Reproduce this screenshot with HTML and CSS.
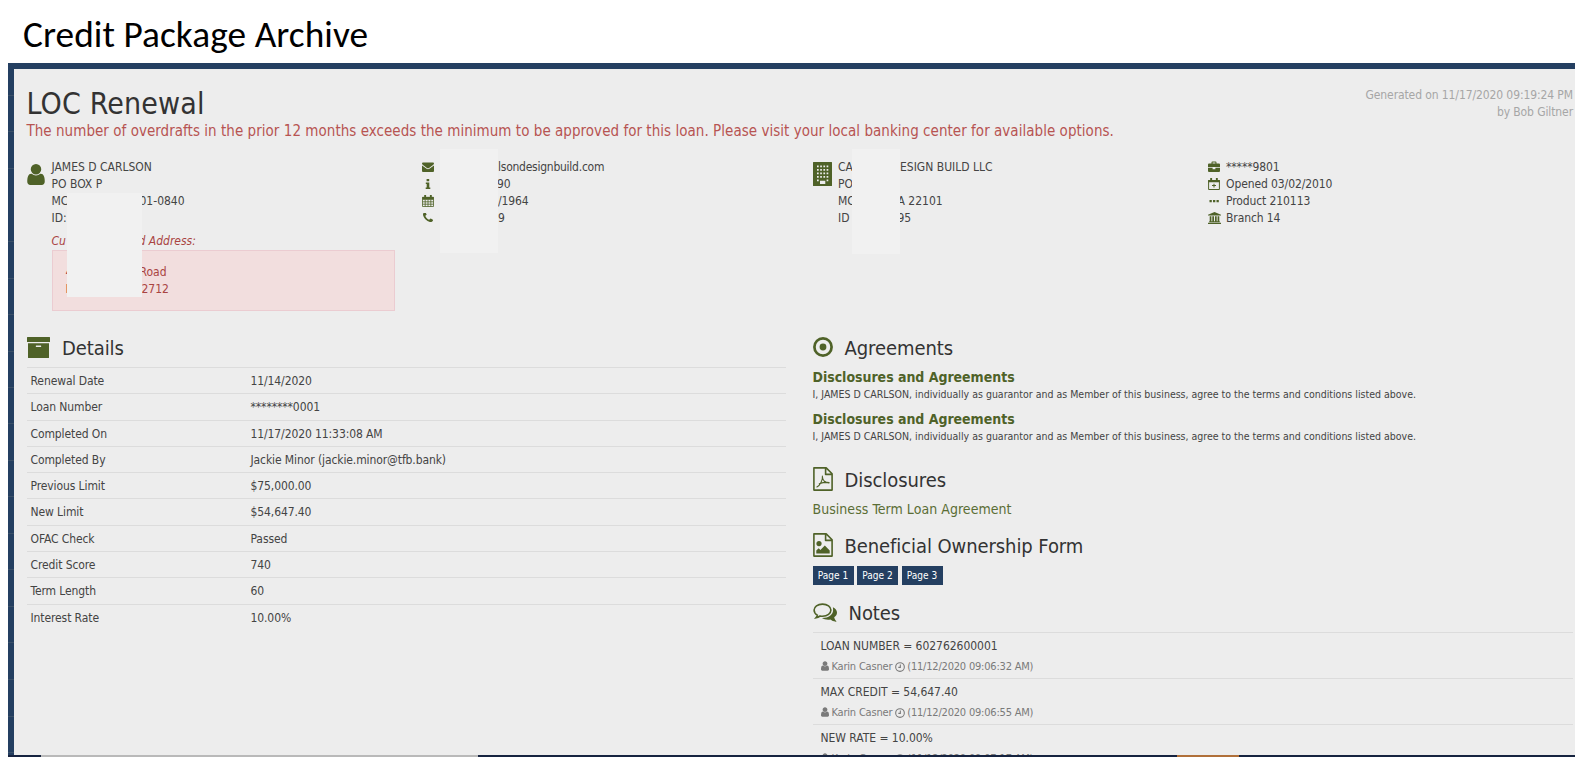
FILE: index.html
```html
<!DOCTYPE html>
<html lang="en">
<head>
<meta charset="utf-8">
<title>Credit Package Archive</title>
<link rel="stylesheet" href="styles.css">
</head>
<body>
<svg class="defs" aria-hidden="true">
  <symbol id="user" viewBox="256 128 1280 1536"><path d="M1536 1399q0 109-62.500 187t-150.500 78h-854q-88 0-150.500-78t-62.500-187q0-85 8.500-160.500t31.500-152 58.500-131 94-89 134.500-34.500q131 128 313 128t313-128q76 0 134.500 34.500t94 89 58.500 131 31.500 152 8.500 160.500zm-256-887q0 159-112.500 271.500t-271.500 112.500-271.500-112.500-112.500-271.500 112.500-271.500 271.500-112.500 271.500 112.500 112.500 271.500z"/></symbol>
  <symbol id="phone" viewBox="192 256 1408 1408"><path d="M1600 1240q0 27-10 70.500t-21 68.500q-21 50-122 106-94 51-186 51-27 0-53-3.500t-57.500-12.500-47-14.500-55.500-20.500-49-18q-98-35-175-83-127-79-264-216t-216-264q-48-77-83-175-3-9-18-49t-20.500-55.500-14.500-47-12.500-57.500-3.500-53q0-92 51-186 56-101 106-122 25-11 68.500-21t70.500-10q14 0 21 3 18 6 53 76 11 19 30 54t35 63.500 31 53.500q3 4 17.500 25t21.500 35.500 7 28.500q0 20-28.500 50t-62 55-62 53-28.500 46q0 9 5 22.500t8.500 20.500 14 24 11.500 19q76 137 174 235t235 174q2 1 19 11.500t24 14 20.500 8.500 22.500 5q18 0 46-28.500t53-62 55-62 50-28.500q14 0 28.500 7t35.500 21.500 25 17.500q25 15 53.500 31t63.500 35 54 30q70 35 76 53 3 7 3 21z"/></symbol>
  <symbol id="clock" viewBox="0 0 12 12"><path d="M6 .8a5.200 5.200 0 1 0 0 10.400A5.200 5.200 0 0 0 6 .8zM6.400 3v3.400H4" fill="none" stroke="currentColor" stroke-width="1.300"/></symbol>
</svg>

<h1 class="slide-title">Credit Package Archive</h1>

<main class="window">
  <div class="rail"></div>
  <div class="content">
    <header class="head">
      <div>
        <h2 class="loan-title">LOC Renewal</h2>
        <p class="warning">The number of overdrafts in the prior 12 months exceeds the minimum to be approved for this loan. Please visit your local banking center for available options.</p>
      </div>
      <p class="generated">Generated on 11/17/2020 09:19:24 PM<br>by Bob Giltner</p>
    </header>

    <section class="contacts">
      <div class="contact">
        <svg class="ico-user"><use href="#user"/></svg>
        <div class="lines">
          <div>JAMES D CARLSON</div>
          <div>PO BOX P</div>
          <div><span class="cut cut-a">MC</span>01-0840</div>
          <div><span class="cut cut-a">ID:</span></div>
          <div class="addr-label"><span class="cut cut-b">Cu</span>d Address:</div>
          <div class="addr">
            <div><span class="cut cut-c">4</span>Road</div>
            <div><span class="cut cut-d">L</span>2712</div>
          </div>
          <div class="mask mask-a"></div>
        </div>
      </div>

      <div class="contact">
        <ul class="facts facts-masked">
          <li><svg class="fi" viewBox="0 0 12 12"><path d="M0 2.600Q0 1.500 1 1.500H11Q12 1.500 12 2.600 12 3.200 11 4L7 6.900Q6 7.500 5 6.900L1 4Q0 3.200 0 2.600zM0 4.500 4.600 7.800Q6 8.700 7.400 7.800L12 4.500V10Q12 11 11 11H1Q0 11 0 10z"/></svg><span class="email">lsondesignbuild.com</span></li>
          <li><svg class="fi" viewBox="0 0 12 12"><path d="M4.600 1h2.600v2.200H4.600zM3.800 4.600h3.500v4.800h1V11H3.700V9.400h1V6.100h-.9z"/></svg><span class="tuck">90</span></li>
          <li><svg class="fi" viewBox="0 0 12 12"><path d="M.5 2.300h11v9.200H.5zM.5 4.500h11M3.200 4.500v7M6 4.500v7M8.800 4.500v7M.5 6.800h11M.5 9.200h11" fill="none" stroke="currentColor" stroke-width=".8"/><path d="M.3 2h11.400v2H.3zM2.200 0h1.900v3H2.200zM7.900 0h1.900v3H7.900z"/></svg><span>/1964</span></li>
          <li><svg class="fi fi-phone"><use href="#phone"/></svg><span>9</span></li>
        </ul>
        <div class="mask mask-b"></div>
      </div>

      <div class="contact">
        <svg class="ico-building" viewBox="0 0 19 24"><path fill-rule="evenodd" d="M.5 0h18q.5 0 .5.500v23q0 .5-.5.500H.5q-.5 0-.5-.5V.5Q0 0 .5 0zM4 3.500v1.700h1.700V3.500zm3.200 0v1.700h1.700V3.500zm3.200 0v1.700h1.700V3.500zm3.200 0v1.700h1.700V3.500zM4 7v1.700h1.700V7zm3.200 0v1.700h1.700V7zm3.200 0v1.700h1.700V7zm3.200 0v1.700h1.700V7zM4 10.500v1.700h1.700v-1.700zm3.200 0v1.700h1.700v-1.700zm3.200 0v1.700h1.700v-1.700zm3.200 0v1.700h1.700v-1.700zM4 14v1.700h1.700V14zm3.200 0v1.700h1.700V14zm3.200 0v1.700h1.700V14zm3.200 0v1.700h1.700V14zM4 17.500v1.700h1.700v-1.700zm9.600 0v1.700h1.700v-1.700zM7 18.800V22h5.300v-3.200z"/></svg>
        <div class="lines">
          <div><span class="cut cut-e">CA</span>ESIGN BUILD LLC</div>
          <div>PO</div>
          <div><span class="cut cut-f">MC</span>A 22101</div>
          <div><span class="cut cut-f">ID</span>95</div>
          <div class="mask mask-c"></div>
        </div>
      </div>

      <div class="contact">
        <ul class="facts">
          <li><svg class="fi" viewBox="0 0 12 12"><path fill-rule="evenodd" d="M3.500 2.500V1.400q0-.9.900-.9h3.200q.9 0 .9.900v1.100H11q1 0 1 1V6H0V3.500q0-1 1-1zm1.100 0h2.800v-.9H4.600zM0 6.700h4.600v1.500h2.800V6.700H12V10q0 1-1 1H1q-1 0-1-1z"/></svg><span>*****9801</span></li>
          <li><svg class="fi" viewBox="0 0 12 12"><path d="M.6 2.500h10.800v9H.6z" fill="none" stroke="currentColor"/><path d="M.2 2h11.600v2.200H.2zM2.200 0h1.900v3H2.200zM7.900 0h1.900v3H7.900zM5.500 5.700h1v1.400H8v1H6.500v1.500h-1V8.100H4v-1h1.500z"/></svg><span>Opened 03/02/2010</span></li>
          <li><svg class="fi" viewBox="0 0 12 12"><path d="M1.500 5h2.300v2.300H1.500zM5 5h2.300v2.300H5zM8.500 5h2.300v2.300H8.500z"/></svg><span>Product 210113</span></li>
          <li><svg class="fi fi-bank" viewBox="0 0 13 12"><path d="M6.500 0 13 2.800v.8H0v-.8zM1.700 4.200h1.700v5h.9v-5H6v5h1v-5h1.700v5h.9v-5h1.700v5h.5v1H1.200v-1h.5zM0 10.700h13V12H0z"/></svg><span>Branch 14</span></li>
        </ul>
      </div>
    </section>

    <div class="columns">
      <section class="left">
        <h3 class="sec"><svg class="ico-box" viewBox="0 0 23 21"><path fill-rule="evenodd" d="M.5 0h22q.5 0 .5.500V5H0V.5Q0 0 .5 0zM1 6.200h21v14.300q0 .5-.5.500h-20q-.5 0-.5-.5zM9.200 8.400q-.4 0-.4.500v.7q0 .4.400.4h4.600q.4 0 .4-.4v-.7q0-.5-.4-.5z"/></svg>Details</h3>
        <dl class="details">
          <div><dt>Renewal Date</dt><dd>11/14/2020</dd></div>
          <div><dt>Loan Number</dt><dd>********0001</dd></div>
          <div><dt>Completed On</dt><dd>11/17/2020 11:33:08 AM</dd></div>
          <div><dt>Completed By</dt><dd>Jackie Minor (jackie.minor@tfb.bank)</dd></div>
          <div><dt>Previous Limit</dt><dd>$75,000.00</dd></div>
          <div><dt>New Limit</dt><dd>$54,647.40</dd></div>
          <div><dt>OFAC Check</dt><dd>Passed</dd></div>
          <div><dt>Credit Score</dt><dd>740</dd></div>
          <div><dt>Term Length</dt><dd>60</dd></div>
          <div><dt>Interest Rate</dt><dd>10.00%</dd></div>
        </dl>
      </section>

      <section class="right">
        <h3 class="sec"><svg class="ico-dot" viewBox="0 0 20 20"><circle cx="10" cy="10" r="8.600" fill="none" stroke="currentColor" stroke-width="2.700"/><circle cx="10" cy="10" r="3.400"/></svg>Agreements</h3>
        <div class="agreement">
          <h4>Disclosures and Agreements</h4>
          <p>I, JAMES D CARLSON, individually as guarantor and as Member of this business, agree to the terms and conditions listed above.</p>
        </div>
        <div class="agreement">
          <h4>Disclosures and Agreements</h4>
          <p>I, JAMES D CARLSON, individually as guarantor and as Member of this business, agree to the terms and conditions listed above.</p>
        </div>

        <h3 class="sec sec-disc"><svg class="ico-file" viewBox="0 0 20 24"><path d="M.9.900h12.300l5.900 5.900v16.300H.9zM12.600.9v6.500h6.500" fill="none" stroke="currentColor" stroke-width="1.600" stroke-linejoin="round"/><path d="M9.300 9.200c.2 3.700 2.700 6.900 6.800 6.700M9.400 9c.6 3.500-2.200 9.300-5.500 11M6.300 16.800c2.600-1 5.600-1.700 9.800-1.300" fill="none" stroke="currentColor" stroke-width="1.100" stroke-linecap="round"/></svg>Disclosures</h3>
        <a class="doc">Business Term Loan Agreement</a>

        <h3 class="sec sec-form"><svg class="ico-file" viewBox="0 0 20 24"><path d="M.9.900h12.300l5.900 5.900v16.300H.9zM12.600.9v6.500h6.500" fill="none" stroke="currentColor" stroke-width="1.600" stroke-linejoin="round"/><circle cx="6" cy="10.600" r="2.600"/><path d="M3.300 20.500v-3l2.400-2.300 1.700 1.700 4.400-4.400 4.900 4.900v3.100z"/></svg>Beneficial Ownership Form</h3>
        <div class="pages"><span>Page 1</span><span>Page 2</span><span>Page 3</span></div>

        <h3 class="sec sec-notes"><svg class="ico-chat" viewBox="0 0 24 19"><path d="M9.500 1.100c4.900 0 8.400 2.500 8.400 6s-3.500 6.100-8.400 6.100q-1.300 0-2.500-.2-1.800 1.400-4 1.800 1-1.200 1.300-2.600C2.300 11.100 1.100 9.200 1.100 7.100c0-3.500 3.500-6 8.400-6z" fill="none" stroke="currentColor" stroke-width="1.600"/><path d="M19.900 4.200c2.500 1.200 4.100 3 4.100 5.300 0 1.900-1 3.600-2.800 4.800.3 1.400.9 2.700 2 3.700.4.400.1.800-.4.700-2.300-.2-3.900-.9-5.400-2.100-3.100.5-6.200 0-8.500-1.500 6.700.1 11.200-3.200 11.200-8 0-1-.1-2-.2-2.900z"/></svg>Notes</h3>
        <div class="notes">
          <div class="note"><div>LOAN NUMBER = 602762600001</div><div class="by"><svg class="by-user"><use href="#user"/></svg>Karin Casner<svg class="by-clock"><use href="#clock"/></svg>(11/12/2020 09:06:32 AM)</div></div>
          <div class="note"><div>MAX CREDIT = 54,647.40</div><div class="by"><svg class="by-user"><use href="#user"/></svg>Karin Casner<svg class="by-clock"><use href="#clock"/></svg>(11/12/2020 09:06:55 AM)</div></div>
          <div class="note"><div>NEW RATE = 10.00%</div><div class="by"><svg class="by-user"><use href="#user"/></svg>Karin Casner<svg class="by-clock"><use href="#clock"/></svg>(11/12/2020 09:07:17 AM)</div></div>
        </div>
      </section>
    </div>
  </div>
</main>
<footer class="taskbar"></footer>
</body>
</html>
```
FILE: styles.css
```css
* { box-sizing: border-box; margin: 0; padding: 0; }

body {
  width: 1575px;
  height: 757px;
  overflow: hidden;
  display: flex;
  flex-direction: column;
  background: #fff;
  color: #444;
  font: 12px/17px "DejaVu Sans Condensed", "DejaVu Sans", sans-serif;
  font-stretch: condensed;
  letter-spacing: -0.1px;
  white-space: nowrap;
}

.defs { position: absolute; width: 0; height: 0; }
svg { fill: currentColor; flex: none; }
ul { list-style: none; }

.slide-title {
  height: 63px;
  padding: 12px 0 0 23px;
  color: #000;
  font: 400 37.33px/45px Carlito, Calibri, sans-serif;
  letter-spacing: 0.06px;
}

.window {
  height: 692px;
  margin-left: 8px;
  display: flex;
  border-top: 6px solid #243f61;
  background: #ededed;
  overflow: hidden;
}

.rail {
  width: 6px;
  flex: none;
  background: repeating-linear-gradient(#243f61 0 26px, #3a5069 26px 27px, #243f61 27px 36.500px);
}

.content { flex: 1; padding: 17px 1px 0 12.500px; }

.head { display: flex; justify-content: space-between; height: 72px; }
.loan-title { font-size: 30px; line-height: 36px; font-weight: 400; letter-spacing: 0.15px; color: #333; }
.warning { font-size: 15px; line-height: 20px; letter-spacing: 0.036px; color: #b75452; margin-top: -1px; }
.generated { padding: 1px 1px 0 0; color: #a6a6a6; text-align: right; }

.contacts {
  display: grid;
  grid-template-columns: 394px 392px 394px 1fr;
  height: 176px;
}
.contact { display: flex; position: relative; }
.lines { position: relative; padding-top: 1px; letter-spacing: 0; }
.cut { display: inline-block; }
.cut-a { width: 88px; }
.cut-b { width: 87px; }
.cut-c { width: 74px; }
.cut-d { width: 76px; }
.cut-e { width: 62px; }
.cut-f { width: 59.500px; }

.ico-user { width: 18px; height: 21px; margin: 6px 7px 0 0; color: #4f6228; }
.ico-building { width: 19px; height: 24px; margin: 4px 6.500px 0 0; color: #4f6228; }

.addr-label { margin-top: 6px; color: #a94442; font-style: italic; }
.addr {
  width: 343px;
  height: 61px;
  padding: 13px;
  border: 1px solid #ebccd1;
  background: #f2dede;
  color: #a94442;
}

.mask { position: absolute; background: #f1f1f1; }
.mask-a { left: 15px; top: 35px; width: 75px; height: 104px; }
.mask-b { left: 19px; top: -9px; width: 58px; height: 104px; }
.mask-c { left: 14px; top: -9px; width: 48px; height: 105px; }

.facts { padding-top: 1px; }
.facts li { display: flex; height: 17px; gap: 6.500px; }
.fi { width: 12px; height: 12px; margin: 2px 0 0 1px; color: #4f6228; }
.fi-phone { width: 10px; height: 10px; margin: 3px 1px 0 2px; }
.fi-bank { width: 13px; margin-right: -1px; }
.facts-masked span { margin-left: 58px; }
.facts-masked .tuck { margin-left: 57px; }
.facts-masked .email { letter-spacing: -0.25px; }

.columns { display: grid; grid-template-columns: 759px 760px; column-gap: 27px; }

.sec {
  display: flex;
  height: 30px;
  color: #333;
  font-size: 20px;
  line-height: 28px;
  font-weight: 400;
  letter-spacing: -0.08px;
}
.sec svg { color: #4f6228; }
.ico-box { width: 23px; height: 21px; margin: 3px 12.500px 0 0; }
.ico-dot { width: 20px; height: 20px; margin: 3px 12px 0 0; }
.ico-file { width: 20px; height: 24px; margin: 1px 12px 0 0; }
.ico-chat { width: 24px; height: 19px; margin: 4px 12px 0 0; }

.details { margin-top: 3px; }
.details div {
  display: grid;
  grid-template-columns: 220px 1fr;
  height: 26.300px;
  padding: 5px 4px 0;
  border-top: 1px solid #dcdcdc;
}

.agreement { margin-top: 5px; }
.agreement + .agreement { margin-top: 9px; }
.agreement h4 { font-size: 14px; line-height: 17px; color: #4f6228; letter-spacing: -0.03px; }
.agreement p { font-size: 10.5px; line-height: 16px; letter-spacing: 0; }

.sec-disc { margin-top: 22px; }
.doc { display: block; margin-top: 3px; font-size: 14px; line-height: 20px; letter-spacing: 0.04px; color: #5b6d35; }
.sec-form { margin-top: 13px; line-height: 29px; }

.pages { display: flex; gap: 3.500px; margin-top: 4px; height: 19px; }
.pages span {
  width: 41px;
  background: #243f61;
  color: #fff;
  font-size: 10px;
  line-height: 19px;
  letter-spacing: 0;
  text-align: center;
}

.sec-notes { margin-top: 14px; }
.notes { margin-top: 3px; }
.note { height: 46px; padding: 3px 8px 0; border-top: 1px solid #dcdcdc; line-height: 20px; letter-spacing: -0.04px; }
.by { display: flex; color: #7a7a7a; font-size: 11px; line-height: 22px; letter-spacing: -0.2px; }
.by-user { width: 8px; height: 10px; margin: 5px 3px 0 0; }
.by-clock { width: 10px; height: 10px; margin: 6px 2.500px 0; }

.taskbar {
  height: 2px;
  background: linear-gradient(90deg, #fff 8px, #16233f 8px 41px, #b9b9b9 41px 478px, #16233f 478px 1177px, #b0703a 1177px 1239px, #16233f 1239px);
}
```
